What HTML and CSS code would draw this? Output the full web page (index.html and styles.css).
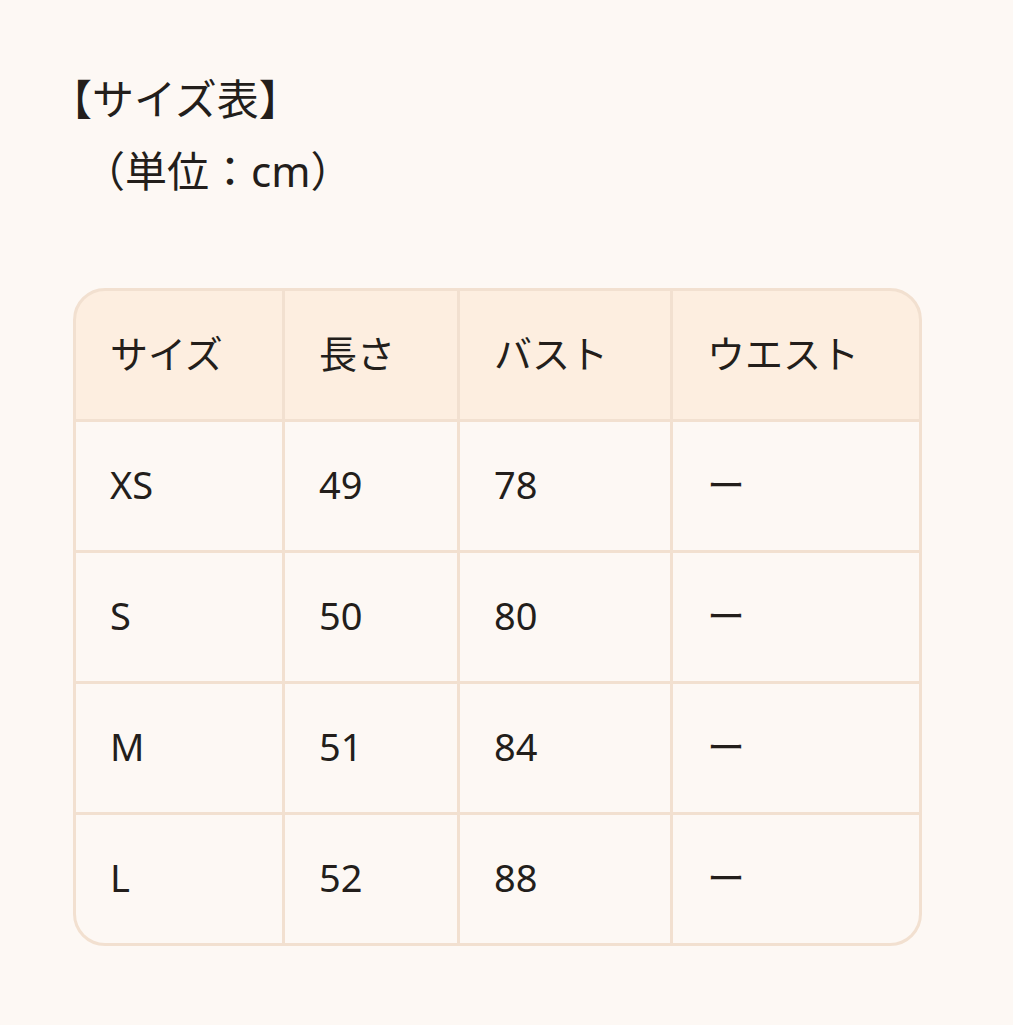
FILE: index.html
```html
<!DOCTYPE html>
<html lang="ja">
<head>
<meta charset="utf-8">
<link rel="stylesheet" href="styles.css">
</head>
<body>
<main class="page">
  <h1 class="title">
    <span class="title-main">【サイズ表】</span>
    <span class="title-unit">（単位：cm）</span>
  </h1>
  <div class="size-table" role="table">
    <div class="cell head" role="columnheader">サイズ</div>
    <div class="cell head" role="columnheader">長さ</div>
    <div class="cell head" role="columnheader">バスト</div>
    <div class="cell head" role="columnheader">ウエスト</div>

    <div class="cell" role="cell">XS</div>
    <div class="cell" role="cell">49</div>
    <div class="cell" role="cell">78</div>
    <div class="cell" role="cell">ー</div>

    <div class="cell" role="cell">S</div>
    <div class="cell" role="cell">50</div>
    <div class="cell" role="cell">80</div>
    <div class="cell" role="cell">ー</div>

    <div class="cell" role="cell">M</div>
    <div class="cell" role="cell">51</div>
    <div class="cell" role="cell">84</div>
    <div class="cell" role="cell">ー</div>

    <div class="cell" role="cell">L</div>
    <div class="cell" role="cell">52</div>
    <div class="cell" role="cell">88</div>
    <div class="cell" role="cell">ー</div>
  </div>
</main>
</body>
</html>
```
FILE: styles.css
```css
html, body {
  margin: 0;
  padding: 0;
  background: #fdf8f4;
}
body {
  font-family: "Noto Sans", "Noto Sans CJK JP", sans-serif;
  color: #231e1b;
}
.page {
  padding: 63px 0 0 73px;
}
.title {
  margin: 0 0 81px -23px;
  font-size: 42px;
  font-weight: 400;
  line-height: 72px;
}
.title-main,
.title-unit {
  display: block;
}
.title-unit {
  padding-left: 33px;
}
.size-table {
  width: 849px;
  box-sizing: border-box;
  display: grid;
  grid-template-columns: 206px 172px 210px 1fr;
  grid-auto-rows: 128px;
  gap: 3px;
  border: 3px solid #f2e0d0;
  background: #f2e0d0;
  border-radius: 32px;
  overflow: hidden;
  font-size: 38px;
}
.cell {
  display: flex;
  align-items: center;
  padding: 0 0 4px 34px;
  background: #fdf8f4;
  line-height: 1;
}
.cell.head {
  background: #fdeee0;
}
```
